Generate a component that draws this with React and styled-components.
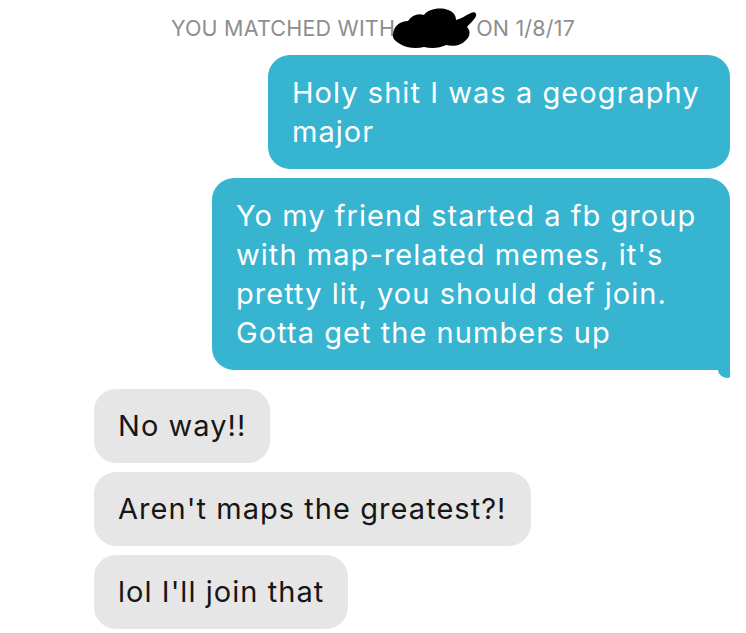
import React from 'react';
import styled, { createGlobalStyle, css } from 'styled-components';

const GlobalStyle = createGlobalStyle`
  html, body {
    margin: 0;
    padding: 0;
    background: #ffffff;
  }
  body {
    font-family: Inter, "Noto Sans", "Liberation Sans", sans-serif;
  }
`;

const messages = [
  { id: 1, mine: true, width: 462, lines: ['Holy shit I was a geography', 'major'] },
  {
    id: 2,
    mine: true,
    width: 518,
    tail: true,
    lines: [
      'Yo my friend started a fb group',
      "with map-related memes, it's",
      'pretty lit, you should def join.',
      'Gotta get the numbers up',
    ],
  },
  { id: 3, mine: false, lines: ['No way!!'] },
  { id: 4, mine: false, lines: ["Aren't maps the greatest?!"] },
  { id: 5, mine: false, lines: ["lol I'll join that"] },
];

// 가려진 이름 부분 (검은 낙서)
const Scribble = () => (
  <Blob viewBox="0 0 86 42" width="86" height="42">
    <path
      d="M1 27 C2 19 8 14 16 14 C20 8 26 6 32 8 C36 2 48 0 56 3 C62 5 64 9 64 13 C69 12 74 8 79 6 C83 4 86 7 83 11 C80 15 77 17 75 20 C79 24 78 30 74 33 C70 38 62 40 54 38 C48 41 40 42 32 40 C24 42 14 41 8 37 C3 34 0 31 1 27 Z"
      fill="#000"
    />
  </Blob>
);

const App = () => {
  return (
    <>
      <GlobalStyle />
      <Screen>
        <Header>
          <span>YOU MATCHED WITH</span>
          <Scribble />
          <span>ON 1/8/17</span>
        </Header>
        <Thread>
          {messages.map((m) => (
            <Row key={m.id} mine={m.mine} gapTop={m.id === 3 ? 10 : 0}>
              <Bubble mine={m.mine} style={m.width ? { width: m.width } : undefined} tail={m.tail}>
                {m.lines.map((l, i) => (
                  <Line key={i}>{l}</Line>
                ))}
                {m.tail && <Tail />}
              </Bubble>
            </Row>
          ))}
        </Thread>
      </Screen>
    </>
  );
};

const Screen = styled.div`
  width: 746px;
  height: 633px;
  overflow: hidden;
  background: #fff;
  box-sizing: border-box;
  padding-top: 6px;
`;

const Header = styled.div`
  display: flex;
  justify-content: center;
  align-items: center;
  height: 44px;
  font-size: 21.5px;
  color: #8e8e8e;
  letter-spacing: 0.2px;
`;

const Blob = styled.svg`
  display: block;
  margin: 0 -2px 0 -3px;
`;

const Thread = styled.div`
  display: flex;
  flex-direction: column;
  gap: 9px;
  margin-top: 5px;
`;

const Row = styled.div`
  display: flex;
  justify-content: ${(p) => (p.mine ? 'flex-end' : 'flex-start')};
  padding: ${(p) => (p.mine ? '0 16px 0 0' : '0 0 0 94px')};
  margin-top: ${(p) => p.gapTop}px;
`;

const Bubble = styled.div`
  position: relative;
  box-sizing: border-box;
  border-radius: 22px;
  font-size: 29px;
  letter-spacing: 1.05px;
  line-height: 39px;
  white-space: nowrap;
  ${(p) =>
    p.mine
      ? css`
          background: #37b4cf;
          color: #ffffff;
          padding: 18px 24px;
        `
      : css`
          background: #e6e6e6;
          color: #161616;
          padding: 17px 24px 18px;
        `}
  ${(p) =>
    p.tail &&
    css`
      border-bottom-right-radius: 0;
    `}
`;

const Line = styled.div``;

const Tail = styled.div`
  position: absolute;
  right: 0;
  bottom: -8px;
  width: 12px;
  height: 9px;
  background: #37b4cf;
  border-bottom-left-radius: 12px 9px;
  border-bottom-right-radius: 2px;
`;

export default App;
